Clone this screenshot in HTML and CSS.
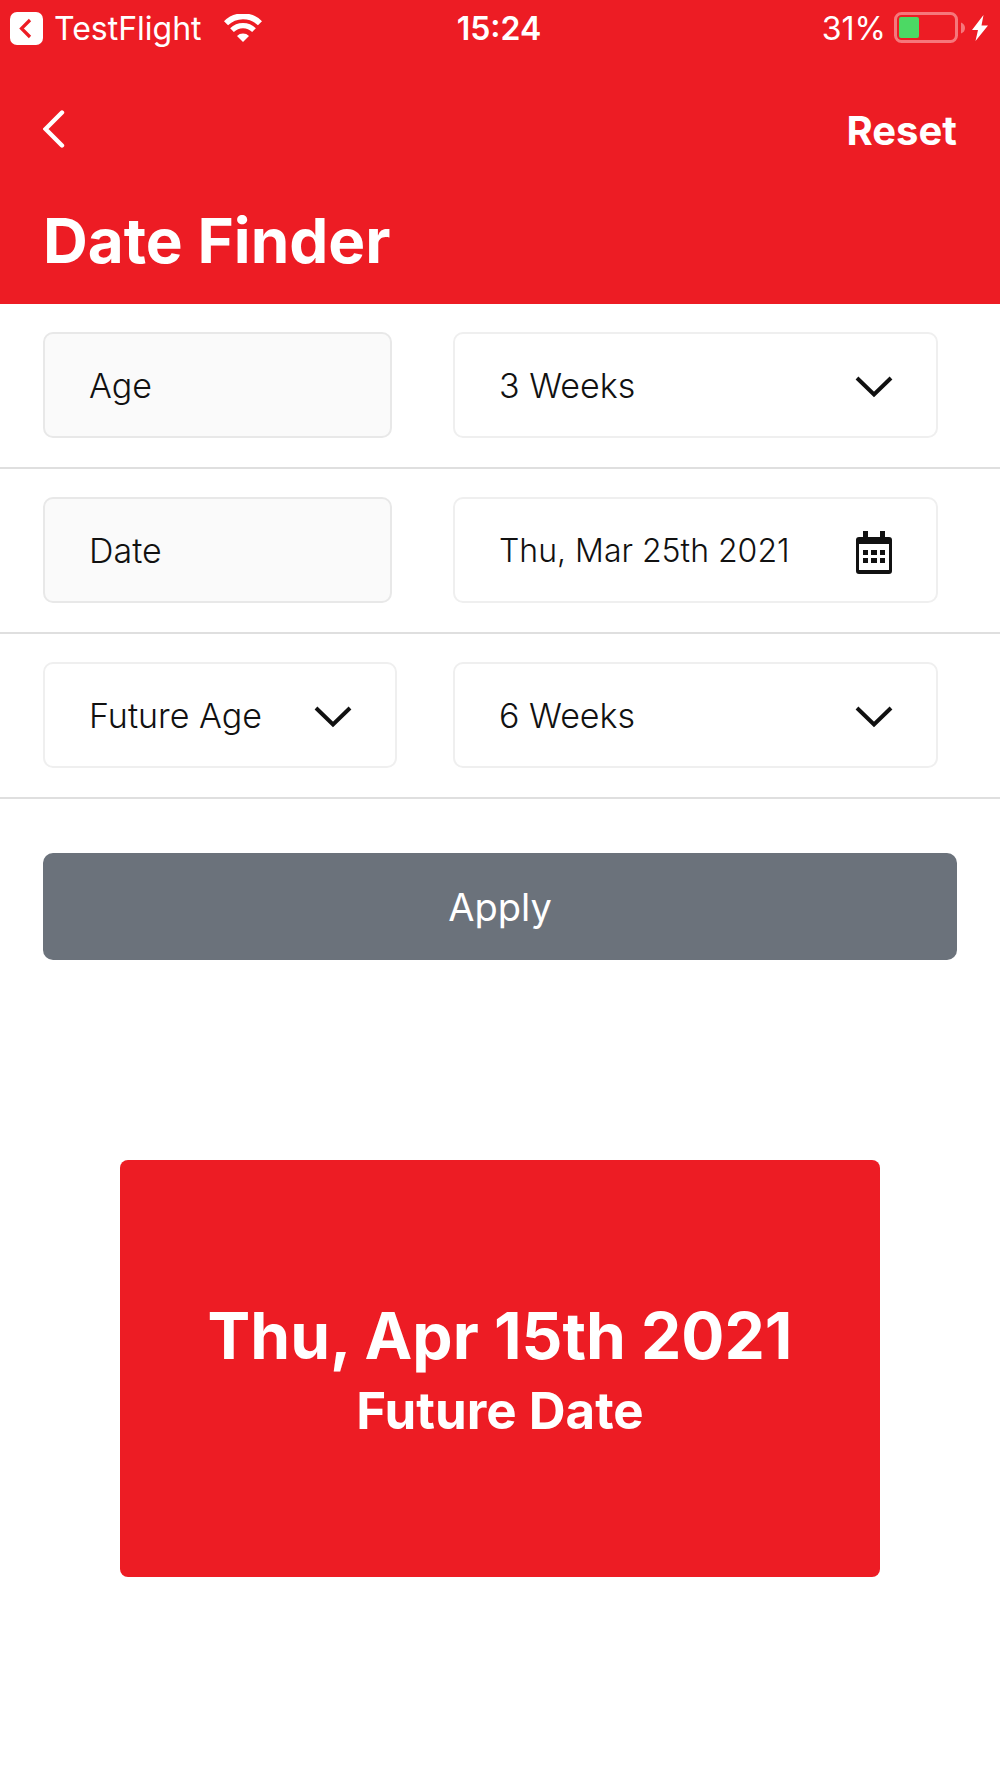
FILE: index.html
```html
<!DOCTYPE html>
<html lang="en">
<head>
<meta charset="utf-8">
<meta name="viewport" content="width=device-width, initial-scale=1">
<title>Date Finder</title>
<link rel="stylesheet" href="styles.css">
</head>
<body>
<header class="header">
  <div class="status">
    <div class="status-left">
      <a class="return-link" href="#testflight">
        <svg width="33" height="33" viewBox="0 0 33 33" aria-hidden="true"><rect width="33" height="33" rx="7" fill="#fff"/><path d="M20 8l-8.500 8.500 8.500 8.500" fill="none" stroke="#ed1c24" stroke-width="3.200"/></svg>
        <span>TestFlight</span>
      </a>
      <svg class="wifi" width="38" height="28" viewBox="0 0 38 28" role="img" aria-label="Wi-Fi"><path d="M2 9.300a24 24 0 0 1 34 0" fill="none" stroke="#fff" stroke-width="5.800"/><path d="M8 16.200a15.500 15.500 0 0 1 22 0" fill="none" stroke="#fff" stroke-width="5.200"/><path d="M19 28l-6-6a8.500 8.500 0 0 1 12 0z" fill="#fff"/></svg>
    </div>
    <time class="clock">15:24</time>
    <div class="status-right">
      <span>31%</span>
      <svg width="94" height="32" viewBox="0 0 94 32" role="img" aria-label="Battery charging"><rect x="1.500" y="1.500" width="61" height="28" rx="6" fill="none" stroke="#f6777b" stroke-width="3"/><rect x="5" y="5" width="20" height="21" rx="2" fill="#4cd964"/><path d="M67 10.500q4 1.500 4 5.500t-4 5.500z" fill="#f6777b"/><path d="M89.500 3L78 18h6L81.500 29 94 13.500h-6.500z" fill="#fff"/></svg>
    </div>
  </div>
  <nav class="nav">
    <button class="back" type="button" aria-label="Back"><svg width="22" height="38" viewBox="0 0 22 38" aria-hidden="true"><path d="M19 2.500L2.500 19 19 35.500" fill="none" stroke="#fff" stroke-width="4.400" stroke-linecap="round"/></svg></button>
    <button class="reset" type="reset" form="finder">Reset</button>
  </nav>
  <h1 class="title">Date Finder</h1>
</header>
<main>
  <form id="finder">
    <div class="row">
      <label class="box box-label" for="age">Age</label>
      <div class="field">
        <select class="box" id="age"><option>3 Weeks</option><option>4 Weeks</option></select>
        <svg class="icon" width="38" height="22" viewBox="0 0 38 22" aria-hidden="true"><path d="M2 2l17 16.500L36 2"/></svg>
      </div>
    </div>
    <div class="row">
      <label class="box box-label" for="date">Date</label>
      <div class="field">
        <input class="box box-date" id="date" type="text" value="Thu, Mar 25th 2021">
        <svg class="icon" width="38" height="44" viewBox="0 0 38 44" aria-hidden="true"><path class="solid" fill-rule="evenodd" d="M8 1h5v6h12V1h5v6h4q3 0 3 3v31q0 3-3 3H4q-3 0-3-3V10q0-3 3-3h4zM4 14v26h30V14z"/><path class="solid" d="M8 20h5v5H8zM16 20h6v5h-6zM25 20h5v5h-5zM8 28h5v5H8zM16 28h6v5h-6zM25 28h5v5h-5z"/></svg>
      </div>
    </div>
    <div class="row">
      <div class="field">
        <select class="box" id="mode" aria-label="Find by"><option>Future Age</option><option>Future Date</option></select>
        <svg class="icon" width="38" height="22" viewBox="0 0 38 22" aria-hidden="true"><path d="M2 2l17 16.500L36 2"/></svg>
      </div>
      <div class="field">
        <select class="box" id="target" aria-label="Future age"><option>6 Weeks</option><option>7 Weeks</option></select>
        <svg class="icon" width="38" height="22" viewBox="0 0 38 22" aria-hidden="true"><path d="M2 2l17 16.500L36 2"/></svg>
      </div>
    </div>
    <div class="actions"><button class="apply" type="submit">Apply</button></div>
  </form>
  <section class="result">
    <p class="result-date">Thu, Apr 15th 2021</p>
    <h2 class="result-name">Future Date</h2>
  </section>
</main>
</body>
</html>
```
FILE: styles.css
```css
* {
  box-sizing: border-box;
}

body {
  margin: 0;
  background: #fff;
  color: #111;
  font-family: Inter, "Liberation Sans", sans-serif;
  font-size: 32px;
}

button,
input,
select {
  margin: 0;
  padding: 0;
  border: 0;
  background: none;
  color: inherit;
  font: inherit;
}

svg {
  display: block;
}

.header {
  background: #ed1c24;
  color: #fff;
  padding-bottom: 23px;
}

.status {
  display: grid;
  grid-template-columns: 1fr auto 1fr;
  align-items: center;
  height: 56px;
  padding: 0 12px 0 10px;
}

.status-left,
.status-right,
.return-link {
  display: flex;
  align-items: center;
}

.status-left {
  gap: 22px;
}

.return-link {
  gap: 11px;
  color: inherit;
  text-decoration: none;
}

.status-right {
  justify-content: flex-end;
  gap: 8px;
}

.clock {
  font-weight: 600;
}

.nav {
  display: flex;
  justify-content: space-between;
  align-items: center;
  height: 145px;
  padding: 0 43px;
}

.reset {
  padding-top: 4px;
  font-size: 40px;
  font-weight: 700;
}

.title {
  margin: 0;
  padding: 0 43px;
  font-size: 62px;
  font-weight: 700;
  line-height: 80px;
}

.row {
  display: grid;
  grid-template-columns: 354fr 485fr;
  column-gap: 56px;
  padding: 28px 62px 29px 43px;
  border-bottom: 2px solid #dfdfdf;
}

.field {
  display: grid;
  align-items: center;
}

.field > * {
  grid-area: 1 / 1;
}

.box {
  display: flex;
  align-items: center;
  width: 100%;
  min-width: 0;
  height: 106px;
  padding: 0 44px;
  border: 2px solid #efefef;
  border-radius: 10px;
  font-size: 34px;
  font-weight: 300;
  appearance: none;
}

.box-label {
  width: auto;
  margin-right: 5px;
  border-color: #e8e8e8;
  background: #fafafa;
}

.box-date {
  font-size: 32px;
}

.icon {
  justify-self: end;
  margin-top: 3px;
  margin-right: 45px;
  pointer-events: none;
}

.icon path {
  fill: none;
  stroke: #111;
  stroke-width: 4;
}

.icon .solid {
  fill: #111;
  stroke: none;
}

.actions {
  padding: 54px 43px 0;
}

.apply {
  display: block;
  width: 100%;
  height: 107px;
  border-radius: 10px;
  background: #6b727b;
  color: #fff;
  font-size: 38px;
}

.result {
  display: flex;
  flex-direction: column;
  align-items: center;
  margin: 200px 12% 0;
  padding: 136px 20px 132px;
  border-radius: 8px;
  background: #ed1c24;
  color: #fff;
}

.result-date,
.result-name {
  margin: 0;
  font-weight: 700;
}

.result-date {
  font-size: 64px;
  line-height: 80px;
}

.result-name {
  font-size: 51px;
  line-height: 69px;
}
```
